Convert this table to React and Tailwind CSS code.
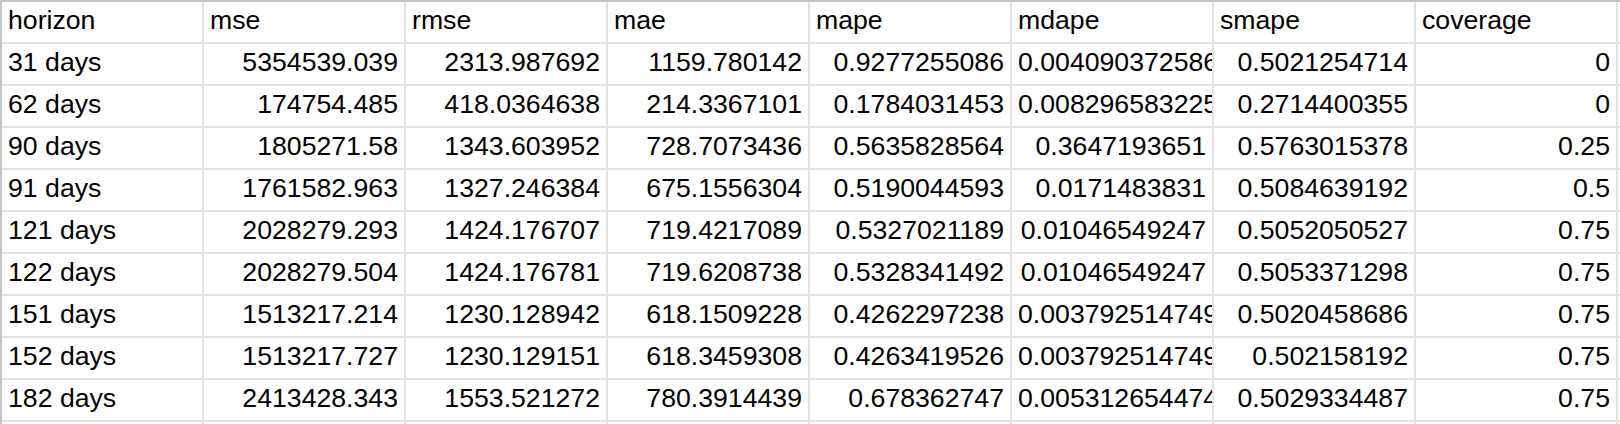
const headers = ['horizon', 'mse', 'rmse', 'mae', 'mape', 'mdape', 'smape', 'coverage']

const rows = [
  ['31 days', '5354539.039', '2313.987692', '1159.780142', '0.9277255086', '0.004090372586', '0.5021254714', '0'],
  ['62 days', '174754.485', '418.0364638', '214.3367101', '0.1784031453', '0.008296583225', '0.2714400355', '0'],
  ['90 days', '1805271.58', '1343.603952', '728.7073436', '0.5635828564', '0.3647193651', '0.5763015378', '0.25'],
  ['91 days', '1761582.963', '1327.246384', '675.1556304', '0.5190044593', '0.0171483831', '0.5084639192', '0.5'],
  ['121 days', '2028279.293', '1424.176707', '719.4217089', '0.5327021189', '0.01046549247', '0.5052050527', '0.75'],
  ['122 days', '2028279.504', '1424.176781', '719.6208738', '0.5328341492', '0.01046549247', '0.5053371298', '0.75'],
  ['151 days', '1513217.214', '1230.128942', '618.1509228', '0.4262297238', '0.003792514749', '0.5020458686', '0.75'],
  ['152 days', '1513217.727', '1230.129151', '618.3459308', '0.4263419526', '0.003792514749', '0.502158192', '0.75'],
  ['182 days', '2413428.343', '1553.521272', '780.3914439', '0.678362747', '0.005312654474', '0.5029334487', '0.75'],
]

// values too long for the cell sit at the left and get clipped at the gridline
const tooLong = (v) => v.length > 13

const Cell = ({ value, align }) => (
  <div
    className={`w-[202px] h-[42px] shrink-0 border-r-2 border-b-2 border-[#e2e2e2] overflow-hidden whitespace-nowrap px-[6px] leading-[37px] ${align === 'right' ? 'text-right' : 'text-left'}`}
  >
    {value}
  </div>
)

export default function App() {
  return (
    <div className="w-[1620px] h-[424px] overflow-hidden bg-white text-black text-[26.67px]" style={{ fontFamily: '"Liberation Sans", Arial, sans-serif' }}>
      <div className="border-t-2 border-l-2 border-[#c4c4c4] w-max">
        {/* Header Row */}
        <div className="flex">
          {headers.map((h) => (
            <Cell key={h} value={h} align="left" />
          ))}
          <Cell value="" align="left" />
        </div>

        {/* Data Rows */}
        {rows.map((row) => (
          <div key={row[0]} className="flex">
            {row.map((v, i) => (
              <Cell key={i} value={v} align={i === 0 || tooLong(v) ? 'left' : 'right'} />
            ))}
            <Cell value="" align="left" />
          </div>
        ))}

        <div className="flex">
          {headers.map((h) => (
            <Cell key={h} value="" align="left" />
          ))}
        </div>
      </div>
    </div>
  )
}
